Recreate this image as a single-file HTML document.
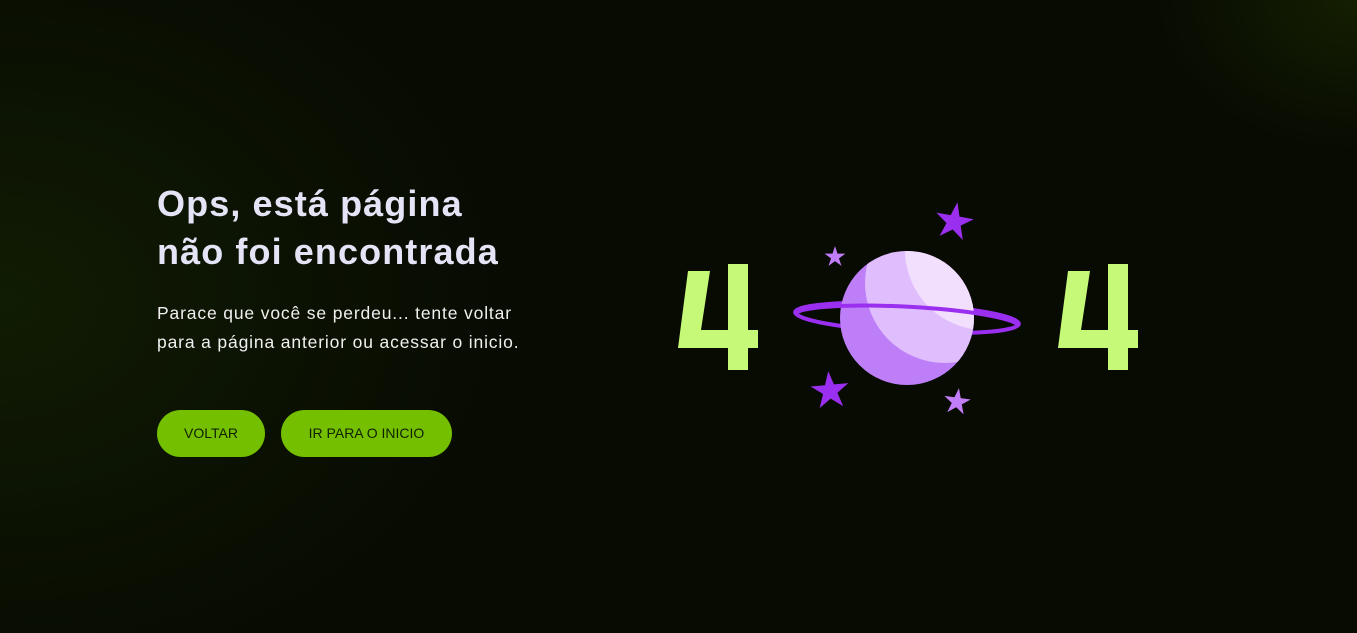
<!DOCTYPE html>
<html><head><meta charset="utf-8"><style>
html,body{margin:0;padding:0}
body{width:1357px;height:633px;overflow:hidden;position:relative;font-family:"Liberation Sans",sans-serif;
background:radial-gradient(ellipse 200px 150px at 1357px 0px,rgba(35,55,0,0.45),transparent),
radial-gradient(ellipse 500px 380px at 0px 300px,rgba(25,45,5,0.5),transparent),#080b02;}
h1{position:absolute;left:157px;top:180px;margin:0;font-size:36px;line-height:48px;font-weight:bold;color:#e4e4f6;letter-spacing:1.1px}
p{position:absolute;left:157px;top:299px;margin:0;font-size:17.5px;line-height:29px;color:#f0f0f0;letter-spacing:0.85px}
.b{position:absolute;top:410px;height:47px;border-radius:24px;background:#74c000;color:#102000;font-size:14px;line-height:47px;text-align:center}
svg{position:absolute;left:0;top:0}
</style></head><body>
<h1>Ops, está página<br>não foi encontrada</h1>
<p>Parace que você se perdeu... tente voltar<br>para a página anterior ou acessar o inicio.</p>
<div class="b" style="left:157px;width:108px">VOLTAR</div>
<div class="b" style="left:281px;width:171px">IR PARA O INICIO</div>
<svg width="1357" height="633">
<defs><clipPath id="c"><circle cx="907" cy="318" r="67"/></clipPath>
<polygon id="s" points="0,-1 0.225,-0.31 0.95,-0.31 0.36,0.12 0.59,0.81 0,0.38 -0.59,0.81 -0.36,0.12 -0.95,-0.31 -0.225,-0.31"/></defs>
<polygon fill="#c6f977" points="688,271 710,271 701,330 728,330 728,264 748,264 748,330 758,330 758,348 748,348 748,370 728,370 728,348 678,348"/>
<polygon fill="#c6f977" transform="translate(380,0)" points="688,271 710,271 701,330 728,330 728,264 748,264 748,330 758,330 758,348 748,348 748,370 728,370 728,348 678,348"/>
<ellipse cx="907" cy="318" rx="112" ry="14" fill="none" stroke="#9b2ff0" stroke-width="4" transform="rotate(3 907 318)"/>
<circle cx="907" cy="318" r="67" fill="#bd7ef8"/>
<g clip-path="url(#c)"><circle cx="945" cy="283" r="80" fill="#e0bdfd"/><circle cx="985" cy="250" r="80" fill="#f2defd"/></g>
<path d="M796,313 A112,14 3 0 1 1018,325" fill="none" stroke="#9b2ff0" stroke-width="4"/>
<use href="#s" fill="#9b2ff0" transform="translate(954,222) scale(20) rotate(10)"/>
<use href="#s" fill="#9b2ff0" transform="translate(830,391) scale(20) rotate(-5)"/>
<use href="#s" fill="#c27ef9" transform="translate(835,257) scale(11)"/>
<use href="#s" fill="#c27ef9" transform="translate(957,402) scale(14) rotate(8)"/>
</svg>
</body></html>
